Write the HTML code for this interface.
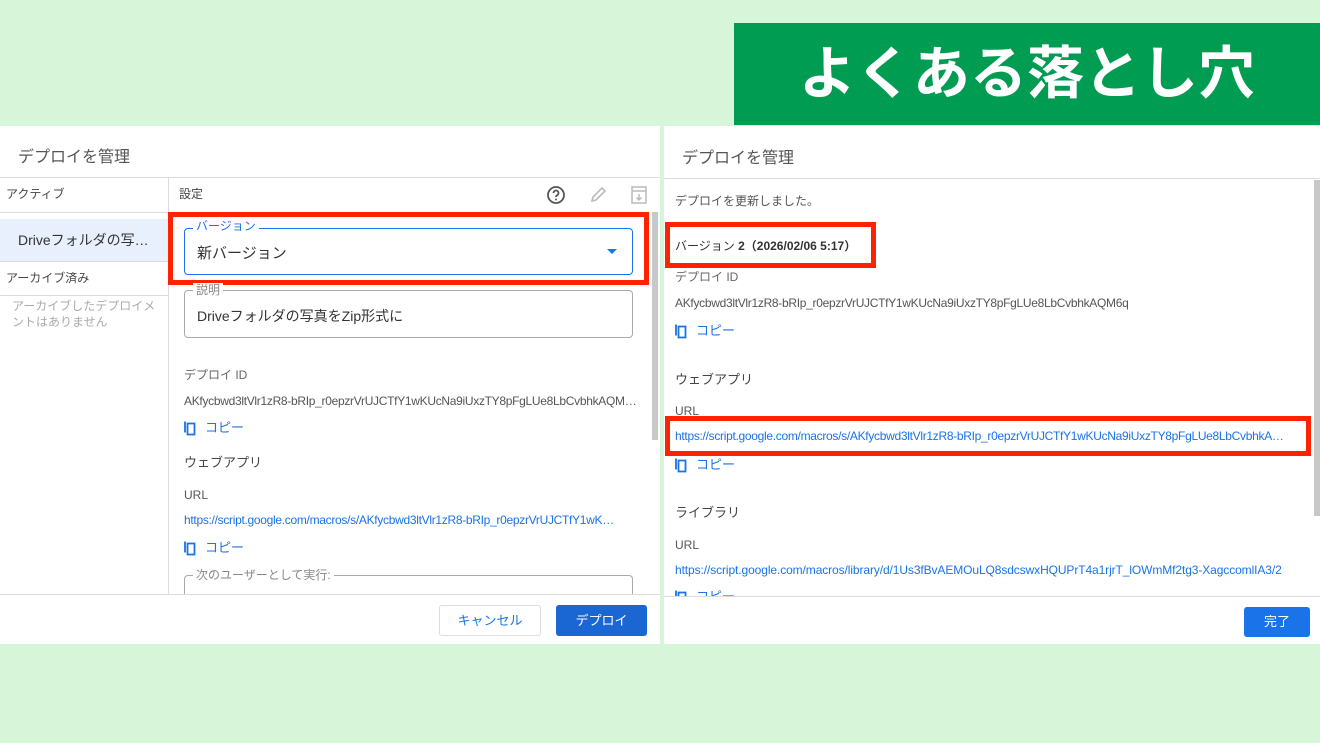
<!DOCTYPE html>
<html><head><meta charset="utf-8"><style>
*{margin:0;padding:0;box-sizing:border-box}
body{width:1320px;height:743px;background:#d7f5d9;position:relative;overflow:hidden;font-family:"Liberation Sans","Noto Sans CJK JP",sans-serif;color:#444}
.a{position:absolute;white-space:nowrap}
.t12{font-size:12px;line-height:14px}
.t13{font-size:13px;line-height:16px}
.blue{color:#1a73e8}
.cond{letter-spacing:-0.3px}
.ln{position:absolute;background:#dadce0;height:1px}
.red{position:absolute;border:5px solid #ff2200}
.copy{position:absolute;font-size:13px;color:#1a73e8}
.copy svg{vertical-align:-4px;margin-right:9px}
</style></head><body>
<div class="a" style="left:734px;top:23px;width:586px;height:102px;background:#009c52"></div>
<div class="a" style="left:734px;top:23px;width:586px;height:102px;color:#fff;font-size:57px;font-weight:bold;line-height:102px;text-align:center;padding-left:0px">よくある落とし穴</div>

<!-- left panel -->
<div class="a" style="left:0;top:126px;width:660px;height:518px;background:#fff"></div>
<div class="a" style="left:18px;top:143px;font-size:16px;color:#555">デプロイを管理</div>
<div class="ln" style="left:0;top:177px;width:660px"></div>
<div class="a" style="left:168px;top:178px;width:1px;height:416px;background:#dadce0"></div>
<div class="a t12" style="left:6px;top:187px">アクティブ</div>
<div class="ln" style="left:0;top:212px;width:168px"></div>
<div class="a" style="left:0;top:219px;width:168px;height:42px;background:#e8f0fe"></div>
<div class="a" style="left:18px;top:230px;font-size:14px;color:#333">Driveフォルダの写…</div>
<div class="ln" style="left:0;top:261px;width:168px"></div>
<div class="a t12" style="left:6px;top:271px">アーカイブ済み</div>
<div class="ln" style="left:0;top:295px;width:168px"></div>
<div class="a t12" style="left:12px;top:298px;color:#aaa;line-height:16px">アーカイブしたデプロイメ<br>ントはありません</div>
<div class="a t12" style="left:179px;top:187px">設定</div>
<svg class="a" style="left:546px;top:185px" width="20" height="20" viewBox="0 0 20 20"><circle cx="10" cy="10" r="8" fill="none" stroke="#555" stroke-width="1.8"/><path d="M7.5 8a2.5 2.5 0 1 1 3.5 2.3c-.8.4-1 .9-1 1.7" fill="none" stroke="#555" stroke-width="1.8"/><circle cx="10" cy="14.5" r="1" fill="#555"/></svg>
<svg class="a" style="left:588px;top:185px" width="20" height="20" viewBox="0 0 20 20"><path d="M4 16l1-4 9-9 3 3-9 9z" fill="none" stroke="#bbb" stroke-width="1.6"/></svg>
<svg class="a" style="left:630px;top:185px" width="18" height="20" viewBox="0 0 18 20"><rect x="2" y="2" width="14" height="16" fill="none" stroke="#bbb" stroke-width="1.5"/><path d="M2 6h14M9 9v6M6.5 12.5L9 15l2.5-2.5" fill="none" stroke="#bbb" stroke-width="1.5"/></svg>
<div class="a" style="left:652px;top:212px;width:6px;height:228px;background:#c8c8c8"></div>
<div class="red" style="left:168px;top:212px;width:481px;height:73px"></div>
<div class="a" style="left:184px;top:228px;width:449px;height:47px;border:1.5px solid #1a73e8;border-radius:4px"></div>
<div class="a t12" style="left:193px;top:219px;background:#fff;padding:0 3px;color:#1a73e8">バージョン</div>
<div class="a" style="left:197px;top:242px;font-size:15px;color:#333">新バージョン</div>
<div class="a" style="left:607px;top:249px;width:0;height:0;border-left:5px solid transparent;border-right:5px solid transparent;border-top:5px solid #1a73e8"></div>
<div class="a" style="left:184px;top:290px;width:449px;height:48px;border:1px solid #aaa;border-radius:4px"></div>
<div class="a t12" style="left:193px;top:283px;background:#fff;padding:0 3px;color:#888">説明</div>
<div class="a" style="left:197px;top:306px;font-size:14px;color:#333">Driveフォルダの写真をZip形式に</div>
<div class="a t12" style="left:184px;top:368px;color:#666">デプロイ ID</div>
<div class="a t12 cond" style="left:184px;top:394px;color:#555">AKfycbwd3ltVlr1zR8-bRIp_r0epzrVrUJCTfY1wKUcNa9iUxzTY8pFgLUe8LbCvbhkAQM…</div>
<div class="copy" style="left:184px;top:417px"><svg width="12" height="16" viewBox="0 0 12 16"><path d="M3.5 3.5h7v11h-7zM1 1.5v11" fill="none" stroke="#1a73e8" stroke-width="1.8"/></svg>コピー</div>
<div class="a t13" style="left:184px;top:455px">ウェブアプリ</div>
<div class="a t12" style="left:184px;top:488px;color:#555">URL</div>
<div class="a t12 blue cond" style="left:184px;top:513px">https://script.google.com/macros/s/AKfycbwd3ltVlr1zR8-bRIp_r0epzrVrUJCTfY1wK…</div>
<div class="copy" style="left:184px;top:537px"><svg width="12" height="16" viewBox="0 0 12 16"><path d="M3.5 3.5h7v11h-7zM1 1.5v11" fill="none" stroke="#1a73e8" stroke-width="1.8"/></svg>コピー</div>
<div class="a" style="left:184px;top:575px;width:449px;height:19px;border:1px solid #aaa;border-bottom:none;border-radius:4px 4px 0 0"></div>
<div class="a t12" style="left:193px;top:568px;background:#fff;padding:0 3px;color:#888">次のユーザーとして実行:</div>
<div class="ln" style="left:0;top:594px;width:660px"></div>
<div class="a" style="left:439px;top:605px;width:102px;height:31px;border:1px solid #ddd;border-radius:3px;color:#1a73e8;font-size:13px;line-height:29px;text-align:center">キャンセル</div>
<div class="a" style="left:556px;top:605px;width:91px;height:31px;background:#1a66d2;border-radius:3px;color:#fff;font-size:13px;line-height:31px;text-align:center">デプロイ</div>

<!-- right panel -->
<div class="a" style="left:664px;top:126px;width:656px;height:518px;background:#fff"></div>
<div class="a" style="left:682px;top:144px;font-size:16px;color:#555">デプロイを管理</div>
<div class="ln" style="left:664px;top:178px;width:656px"></div>
<div class="a" style="left:1314px;top:180px;width:6px;height:336px;background:#c8c8c8"></div>
<div class="a t12" style="left:675px;top:194px;color:#555">デプロイを更新しました。</div>
<div class="red" style="left:665px;top:222px;width:211px;height:46px"></div>
<div class="a t12" style="left:675px;top:239px;color:#333">バージョン <b>2（2026/02/06 5:17）</b></div>
<div class="a t12" style="left:675px;top:270px;color:#666">デプロイ ID</div>
<div class="a t12 cond" style="left:675px;top:296px;color:#555;font-size:12px">AKfycbwd3ltVlr1zR8-bRIp_r0epzrVrUJCTfY1wKUcNa9iUxzTY8pFgLUe8LbCvbhkAQM6q</div>
<div class="copy" style="left:675px;top:320px"><svg width="12" height="16" viewBox="0 0 12 16"><path d="M3.5 3.5h7v11h-7zM1 1.5v11" fill="none" stroke="#1a73e8" stroke-width="1.8"/></svg>コピー</div>
<div class="a t13" style="left:675px;top:372px">ウェブアプリ</div>
<div class="a t12" style="left:675px;top:404px;color:#555">URL</div>
<div class="red" style="left:665px;top:416px;width:646px;height:40px"></div>
<div class="a t12 blue cond" style="left:675px;top:429px">https://script.google.com/macros/s/AKfycbwd3ltVlr1zR8-bRIp_r0epzrVrUJCTfY1wKUcNa9iUxzTY8pFgLUe8LbCvbhkA…</div>
<div class="copy" style="left:675px;top:454px"><svg width="12" height="16" viewBox="0 0 12 16"><path d="M3.5 3.5h7v11h-7zM1 1.5v11" fill="none" stroke="#1a73e8" stroke-width="1.8"/></svg>コピー</div>
<div class="a t13" style="left:675px;top:505px">ライブラリ</div>
<div class="a t12" style="left:675px;top:538px;color:#555">URL</div>
<div class="a t12 blue" style="left:675px;top:563px;letter-spacing:-0.1px">https://script.google.com/macros/library/d/1Us3fBvAEMOuLQ8sdcswxHQUPrT4a1rjrT_lOWmMf2tg3-XagccomlIA3/2</div>
<div class="a" style="left:664px;top:585px;width:650px;height:11px;overflow:hidden"><div class="copy" style="left:11px;top:1px"><svg width="12" height="16" viewBox="0 0 12 16"><path d="M3.5 3.5h7v11h-7zM1 1.5v11" fill="none" stroke="#1a73e8" stroke-width="1.8"/></svg>コピー</div></div>
<div class="ln" style="left:664px;top:596px;width:656px"></div>
<div class="a" style="left:1244px;top:607px;width:66px;height:30px;background:#1a73e8;border-radius:3px;color:#fff;font-size:13px;line-height:30px;text-align:center">完了</div>
</body></html>
